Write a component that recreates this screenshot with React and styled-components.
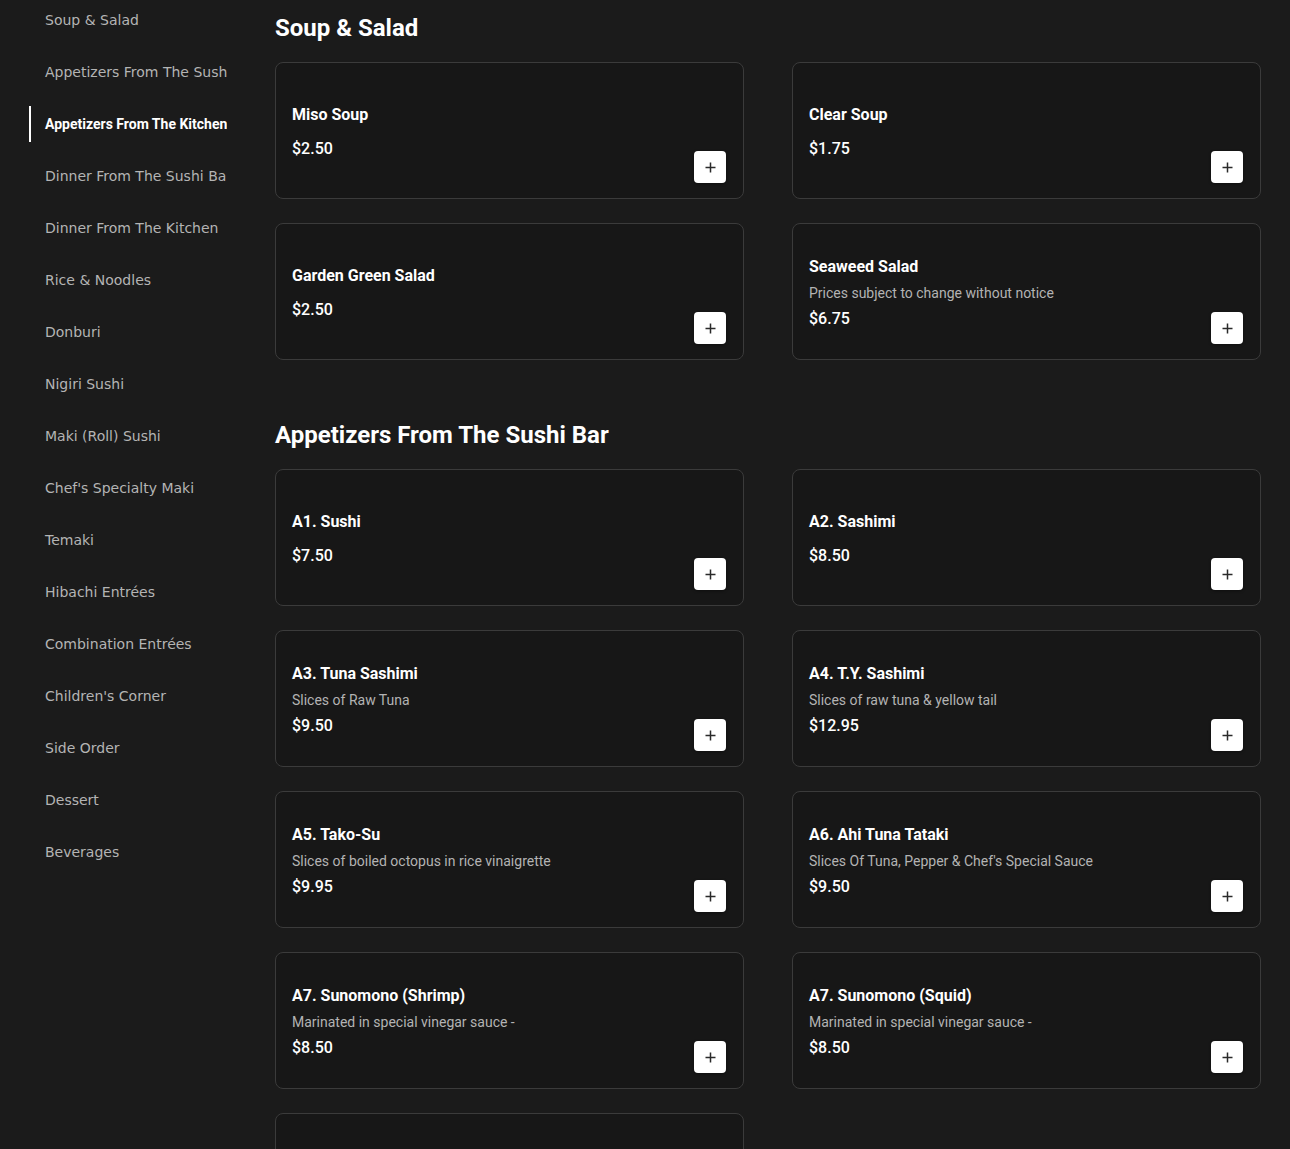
import React from 'react';
import styled, { createGlobalStyle } from 'styled-components';

const GlobalStyle = createGlobalStyle`
    html, body { margin: 0; padding: 0; background: #1b1b1b; }
    body { font-family: Roboto, "Liberation Sans", sans-serif; color: #fff; }
    * { box-sizing: border-box; }
`;

const categories = [
    'Soup & Salad',
    'Appetizers From The Sushi Bar',
    'Appetizers From The Kitchen',
    'Dinner From The Sushi Bar',
    'Dinner From The Kitchen',
    'Rice & Noodles',
    'Donburi',
    'Nigiri Sushi',
    'Maki (Roll) Sushi',
    "Chef's Specialty Maki",
    'Temaki',
    'Hibachi Entrées',
    'Combination Entrées',
    "Children's Corner",
    'Side Order',
    'Dessert',
    'Beverages',
];

const sections = [
    {
        title: 'Soup & Salad',
        items: [
            { name: 'Miso Soup', price: '$2.50' },
            { name: 'Clear Soup', price: '$1.75' },
            { name: 'Garden Green Salad', price: '$2.50' },
            { name: 'Seaweed Salad', desc: 'Prices subject to change without notice', price: '$6.75' },
        ],
    },
    {
        title: 'Appetizers From The Sushi Bar',
        items: [
            { name: 'A1. Sushi', price: '$7.50' },
            { name: 'A2. Sashimi', price: '$8.50' },
            { name: 'A3. Tuna Sashimi', desc: 'Slices of Raw Tuna', price: '$9.50' },
            { name: 'A4. T.Y. Sashimi', desc: 'Slices of raw tuna & yellow tail', price: '$12.95' },
            { name: 'A5. Tako-Su', desc: 'Slices of boiled octopus in rice vinaigrette', price: '$9.95' },
            { name: 'A6. Ahi Tuna Tataki', desc: "Slices Of Tuna, Pepper & Chef's Special Sauce", price: '$9.50' },
            { name: 'A7. Sunomono (Shrimp)', desc: 'Marinated in special vinegar sauce -', price: '$8.50' },
            { name: 'A7. Sunomono (Squid)', desc: 'Marinated in special vinegar sauce -', price: '$8.50' },
            { name: 'A8. Kani Su', desc: 'Crab stick in rice vinaigrette', price: '$7.95' },
        ],
    },
];

const Page = styled.div`
    display: flex;
    gap: 48px;
    padding: 12px 29px 40px;
    min-height: 1149px;
`;

const Sidebar = styled.nav`
    width: 198px;
    flex-shrink: 0;
    margin-top: -10px;
    display: flex;
    flex-direction: column;
    gap: 16px;
`;

const NavItem = styled.div`
    height: 36px;
    display: flex;
    align-items: center;
    padding-left: 14px;
    border-left: 2px solid ${p => (p.$active ? '#ffffff' : 'transparent')};
    white-space: nowrap;
    overflow: hidden;
    font-family: ${p => (p.$active ? 'Roboto, "Liberation Sans", sans-serif' : '"DejaVu Sans", sans-serif')};
    font-size: 14px;
    font-weight: ${p => (p.$active ? 700 : 400)};
    color: ${p => (p.$active ? '#ffffff' : '#b4b4b4')};
`;

const Main = styled.main`
    flex: 1;
    display: flex;
    flex-direction: column;
    gap: 59px;
`;

const SectionTitle = styled.h2`
    margin: 0 0 18px;
    font-size: 24px;
    line-height: 32px;
    font-weight: 700;
    color: #fff;
`;

const Grid = styled.div`
    display: grid;
    grid-template-columns: 1fr 1fr;
    column-gap: 48px;
    row-gap: 24px;
`;

const Card = styled.div`
    min-height: 137px;
    display: flex;
    padding: 16px;
    background: #171717;
    border: 1px solid #3b3b3b;
    border-radius: 8px;
`;

const CardBody = styled.div`
    flex: 1;
    display: flex;
    flex-direction: column;
    justify-content: center;
    gap: 4px;
    padding-top: 2px;
`;

const ItemName = styled.div`
    font-size: 16px;
    line-height: 24px;
    font-weight: 700;
    color: #fff;
`;

const ItemDesc = styled.div`
    font-size: 14px;
    line-height: 20px;
    color: #b3b3b3;
    min-height: ${p => (p.$empty ? '2px' : '20px')};
`;

const Price = styled.div`
    font-size: 16px;
    line-height: 24px;
    font-weight: 500;
    color: #fff;
`;

const AddButton = styled.button`
    align-self: flex-end;
    width: 32px;
    height: 32px;
    flex-shrink: 0;
    margin: 0 1px -1px 0;
    display: flex;
    align-items: center;
    justify-content: center;
    padding: 0;
    border: none;
    border-radius: 4px;
    background: #fff;
    color: #222;
    box-shadow: 0 1px 3px rgba(0, 0, 0, 0.4);
    cursor: pointer;
`;

const PlusIcon = () => (
    <svg width="11" height="11" viewBox="0 0 11 11" fill="none" stroke="#2a2a2a" strokeWidth="1.5">
        <path d="M5.5 0.5v10M0.5 5.5h10" />
    </svg>
);

const App = () => {
    return (
        <>
            <GlobalStyle />
            <Page>
                <Sidebar>
                    {categories.map(c => (
                        <NavItem key={c} $active={c === 'Appetizers From The Kitchen'}>{c}</NavItem>
                    ))}
                </Sidebar>
                <Main>
                    {sections.map(s => (
                        <section key={s.title}>
                            <SectionTitle>{s.title}</SectionTitle>
                            <Grid>
                                {s.items.map((it, i) => (
                                    <Card key={i}>
                                        <CardBody>
                                            <ItemName>{it.name}</ItemName>
                                            <ItemDesc $empty={!it.desc}>{it.desc}</ItemDesc>
                                            <Price>{it.price}</Price>
                                        </CardBody>
                                        <AddButton aria-label="Add"><PlusIcon /></AddButton>
                                    </Card>
                                ))}
                            </Grid>
                        </section>
                    ))}
                </Main>
            </Page>
        </>
    );
};

export default App;
